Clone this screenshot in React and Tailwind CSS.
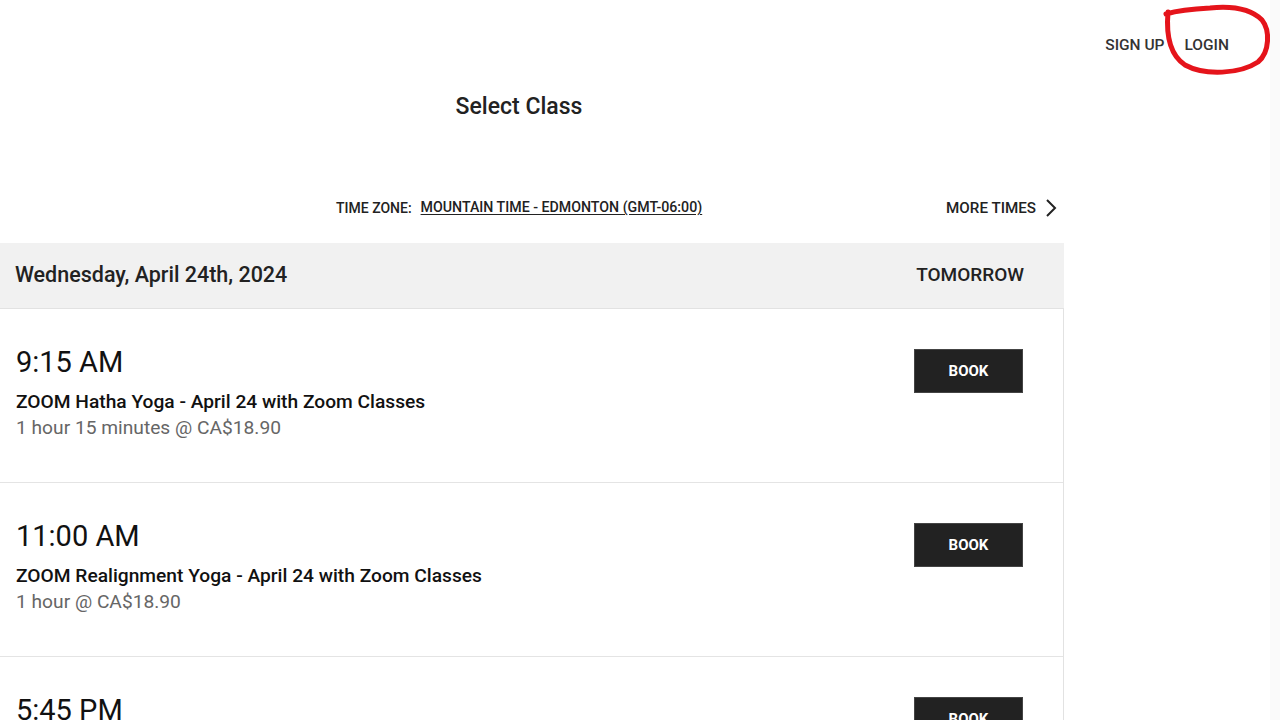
import React from "react";

const classes = [
  { time: "9:15 AM", name: "ZOOM Hatha Yoga - April 24 with Zoom Classes", info: "1 hour 15 minutes @ CA$18.90" },
  { time: "11:00 AM", name: "ZOOM Realignment Yoga - April 24 with Zoom Classes", info: "1 hour @ CA$18.90" },
  { time: "5:45 PM", name: "ZOOM Yin Yoga - April 24 with Zoom Classes", info: "1 hour 15 minutes @ CA$18.90" },
];

export default function App() {
  return (
    <div className="relative flex h-[720px] w-[1280px] overflow-hidden bg-white text-[#222]" style={{ fontFamily: "Roboto, 'Noto Sans', sans-serif" }}>
      <div className="flex flex-1 flex-col">
        <header className="flex h-[88px] shrink-0 items-center justify-end gap-[20px] pr-[41px] pt-[3px] text-[15.5px] font-medium text-[#333]">
          <span>SIGN UP</span>
          <span>LOGIN</span>
        </header>
        <div className="w-[1064px] shrink-0">
          <h1 className="mt-[5px] w-[1038px] text-center text-[23px] font-medium leading-[28px] text-[#222]">Select Class</h1>
          <div className="mt-[77px] flex h-[20px] items-center">
            <div className="w-[336px]" />
            <div className="flex items-center gap-[9px] text-[14px] font-medium text-[#222]">
              <span>TIME ZONE:</span>
              <span className="text-[14.2px] underline underline-offset-2">MOUNTAIN TIME - EDMONTON (GMT-06:00)</span>
            </div>
            <div className="flex-1" />
            <div className="flex items-center gap-[9px] pr-[7px] text-[15.2px] font-medium text-[#222]">
              <span>MORE TIMES</span>
              <svg width="12" height="20" viewBox="0 0 12 20" fill="none">
                <polyline points="2,2 10,10 2,18" stroke="#222" strokeWidth="2" />
              </svg>
            </div>
          </div>
          <div className="mt-[25px] flex h-[66px] items-center justify-between border-b border-[#e2e2e2] bg-[#f1f1f1] pl-[15px] pr-[40px]">
            <span className="text-[21.5px] font-medium">Wednesday, April 24th, 2024</span>
            <span className="text-[19px] font-medium">TOMORROW</span>
          </div>
          <div className="border-r border-[#e2e2e2]">
            {classes.map((c) => (
              <div key={c.time} className="flex h-[174px] items-start justify-between border-b border-[#e4e4e4] pl-[16px] pr-[40px] pt-[36px]">
                <div className="flex flex-col">
                  <span className="text-[29px] leading-[34px] text-[#111]">{c.time}</span>
                  <span className="mt-[10px] text-[19.2px] font-medium leading-[26px] text-[#111]">{c.name}</span>
                  <span className="text-[19.2px] leading-[26px] text-[#666]">{c.info}</span>
                </div>
                <button className="mt-[4px] flex h-[44px] w-[109px] items-center justify-center border border-[#444] bg-[#222] text-[15px] font-bold text-white">
                  BOOK
                </button>
              </div>
            ))}
          </div>
        </div>
      </div>
      <div className="w-[10px] bg-[#fafafa]" />
      <svg className="absolute left-[1150px] top-0" width="130" height="90" viewBox="0 0 130 90" fill="none">
        <path
          d="M 18 12 C 16 35, 20 55, 35 65 C 55 76, 90 74, 108 62 C 120 52, 120 30, 112 20 C 100 8, 80 6, 60 8 C 40 9, 26 11, 16 14"
          stroke="#e5141b"
          strokeWidth="5"
          strokeLinecap="round"
        />
      </svg>
    </div>
  );
}
